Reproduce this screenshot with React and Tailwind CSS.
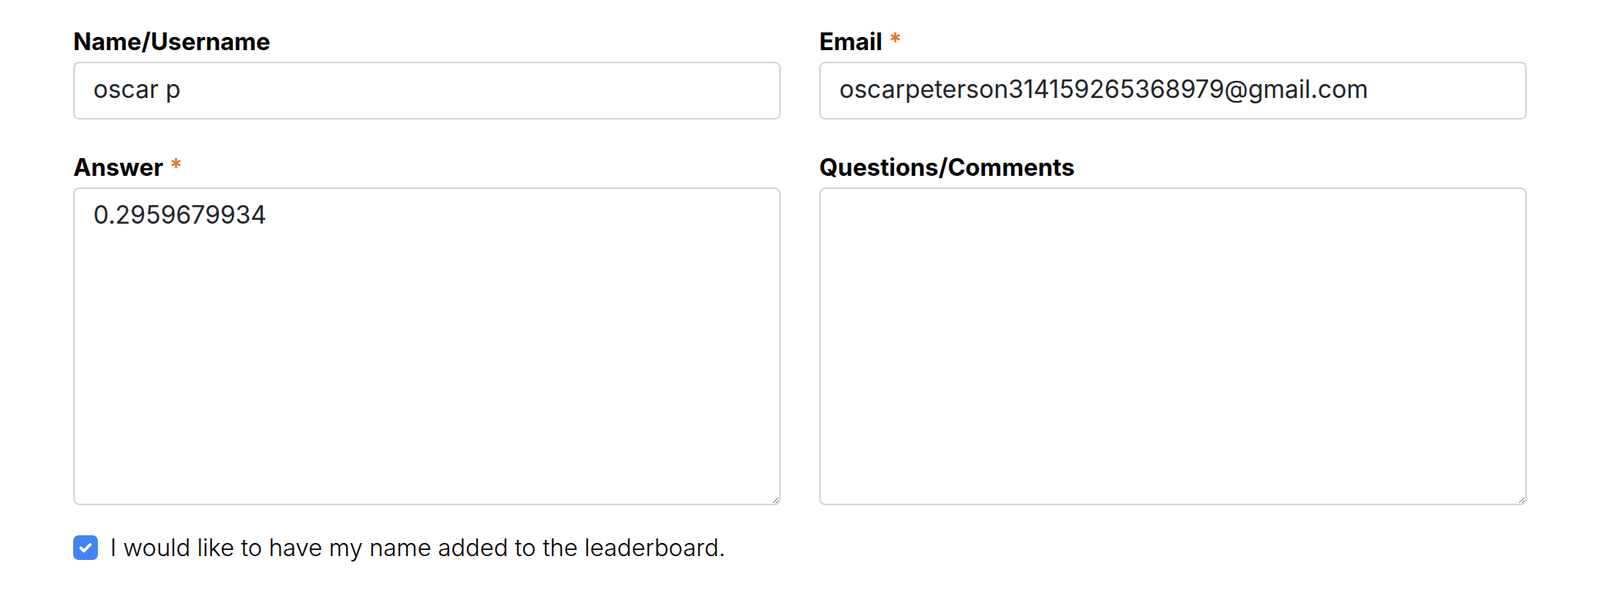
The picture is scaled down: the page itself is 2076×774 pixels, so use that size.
import React, { useState } from "react";

const Label = ({ children, required }) => (
  <label className="block text-[31px] leading-[38px] font-bold text-black mb-[7px]">
    {children}
    {required && <span className="text-[#e8772e] ml-[8px]">*</span>}
  </label>
);

const App = () => {
  const [name, setName] = useState("oscar p");
  const [email, setEmail] = useState("oscarpeterson314159265368979@gmail.com");
  const [answer, setAnswer] = useState("0.2959679934");
  const [comments, setComments] = useState("");
  const [board, setBoard] = useState(true);

  return (
    <div
      className="min-h-screen bg-white px-[95px] pt-[35px]"
      style={{ fontFamily: "Inter, 'Noto Sans', sans-serif" }}
    >
      <div className="grid grid-cols-2 gap-x-[50px] gap-y-[43px]">
        <div>
          <Label>Name/Username</Label>
          <input
            type="text"
            value={name}
            onChange={(e) => setName(e.target.value)}
            className="w-full h-[75px] px-[24px] pb-[4px] text-[32px] text-[#212529] border-2 border-[#d3d6da] rounded-[8px] outline-none bg-white"
          />
        </div>
        <div>
          <Label required>Email</Label>
          <input
            type="email"
            value={email}
            onChange={(e) => setEmail(e.target.value)}
            className="w-full h-[75px] px-[24px] pb-[4px] text-[32px] text-[#212529] border-2 border-[#d3d6da] rounded-[8px] outline-none bg-white"
          />
        </div>
        <div>
          <Label required>Answer</Label>
          <textarea
            value={answer}
            onChange={(e) => setAnswer(e.target.value)}
            className="block w-full h-[412px] px-[24px] py-[10px] text-[32px] text-[#212529] border-2 border-[#d3d6da] rounded-[8px] outline-none bg-white"
          />
        </div>
        <div>
          <Label>Questions/Comments</Label>
          <textarea
            value={comments}
            onChange={(e) => setComments(e.target.value)}
            className="block w-full h-[412px] px-[24px] py-[10px] text-[32px] text-[#212529] border-2 border-[#d3d6da] rounded-[8px] outline-none bg-white"
          />
        </div>
      </div>

      <label className="mt-[32px] flex items-center gap-[16px] cursor-pointer">
        <button
          type="button"
          onClick={() => setBoard((p) => !p)}
          className={`w-[32px] h-[32px] shrink-0 rounded-[7px] flex items-center justify-center ${
            board ? "bg-[#4384f3]" : "bg-white border-2 border-[#d3d6da]"
          }`}
        >
          {board && (
            <svg width="24" height="24" viewBox="0 0 24 24" fill="none">
              <path
                d="M6 12.5l3.8 3.8L18 8"
                stroke="white"
                strokeWidth="3.8"
                strokeLinecap="round"
                strokeLinejoin="round"
              />
            </svg>
          )}
        </button>
        <span className="text-[31px] font-light text-black">
          I would like to have my name added to the leaderboard.
        </span>
      </label>
    </div>
  );
};

export default App;
